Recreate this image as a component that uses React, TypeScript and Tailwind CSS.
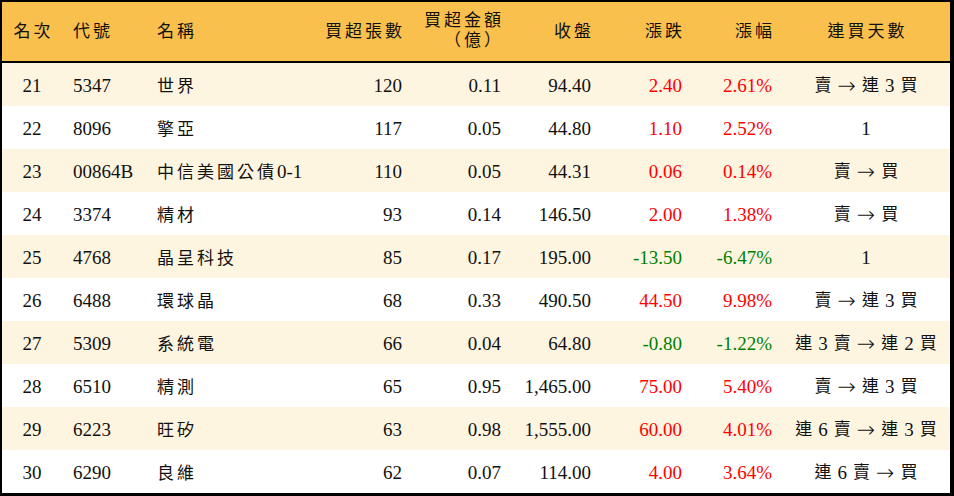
const rows = [
  { rank: 21, code: "5347", name: "世界", vol: "120", amt: "0.11", close: "94.40", chg: "2.40", pct: "2.61%", days: "賣 → 連 3 買" },
  { rank: 22, code: "8096", name: "擎亞", vol: "117", amt: "0.05", close: "44.80", chg: "1.10", pct: "2.52%", days: "1" },
  { rank: 23, code: "00864B", name: "中信美國公債0-1", vol: "110", amt: "0.05", close: "44.31", chg: "0.06", pct: "0.14%", days: "賣 → 買" },
  { rank: 24, code: "3374", name: "精材", vol: "93", amt: "0.14", close: "146.50", chg: "2.00", pct: "1.38%", days: "賣 → 買" },
  { rank: 25, code: "4768", name: "晶呈科技", vol: "85", amt: "0.17", close: "195.00", chg: "-13.50", pct: "-6.47%", days: "1" },
  { rank: 26, code: "6488", name: "環球晶", vol: "68", amt: "0.33", close: "490.50", chg: "44.50", pct: "9.98%", days: "賣 → 連 3 買" },
  { rank: 27, code: "5309", name: "系統電", vol: "66", amt: "0.04", close: "64.80", chg: "-0.80", pct: "-1.22%", days: "連 3 賣 → 連 2 買" },
  { rank: 28, code: "6510", name: "精測", vol: "65", amt: "0.95", close: "1,465.00", chg: "75.00", pct: "5.40%", days: "賣 → 連 3 買" },
  { rank: 29, code: "6223", name: "旺矽", vol: "63", amt: "0.98", close: "1,555.00", chg: "60.00", pct: "4.01%", days: "連 6 賣 → 連 3 買" },
  { rank: 30, code: "6290", name: "良維", vol: "62", amt: "0.07", close: "114.00", chg: "4.00", pct: "3.64%", days: "連 6 賣 → 買" },
]

const cols = "grid grid-cols-[60px_85px_163px_102px_99px_90px_91px_90px_1fr]"
const isCjk = (s: string) => /[\u3000-\u9fff\uff00-\uffef]/.test(s)

// split mixed text into CJK / latin runs so CJK gets its own size + spacing
function Mixed({ text }: { text: string }) {
  const parts = text.match(/[\u3000-\u9fff\uff00-\uffef]+|[^\u3000-\u9fff\uff00-\uffef]+/g) || []
  return (
    <>
      {parts.map((p, i) =>
        isCjk(p) ? (
          <span key={i} className="text-[17px] tracking-[3px]">{p}</span>
        ) : (
          <span key={i}>{p}</span>
        )
      )}
    </>
  )
}

function Days({ text }: { text: string }) {
  return (
    <div className="flex items-center justify-center gap-[6px]">
      {text.split(" ").map((t, i) => {
        if (t === "→")
          return (
            <span key={i} className="text-[22px] leading-none font-['DejaVu_Sans'] font-extralight">→</span>
          )
        return <span key={i} className={isCjk(t) ? "text-[17px]" : "text-[19px]"}>{t}</span>
      })}
    </div>
  )
}

function Head({ children, className = "" }: { children: React.ReactNode; className?: string }) {
  return <div className={`flex items-center text-[17px] tracking-[3px] ${className}`}>{children}</div>
}

export default function App() {
  return (
    <div
      className="w-[954px] h-[496px] bg-white text-[#111] border-l-2 border-t-2 border-r-4 border-b-[3px] border-black overflow-hidden"
      style={{ fontFamily: "'Liberation Serif', 'Noto Sans CJK TC', serif" }}
    >
      {/* Header */}
      <div className={`${cols} h-[61px] bg-[#F9C04E] border-b-2 border-black pt-[1px]`}>
        <Head className="justify-center pl-[3px]">名次</Head>
        <Head className="pl-[11px]">代號</Head>
        <Head className="pl-[10px]">名稱</Head>
        <Head className="justify-end pr-[7px]">買超張數</Head>
        <div className="flex flex-col justify-center items-end pr-[7px] text-[17px] tracking-[3px] leading-[20px] pb-[2px]">
          <span>買超金額</span>
          <span>（億）</span>
        </div>
        <Head className="justify-end pr-[7px]">收盤</Head>
        <Head className="justify-end pr-[7px]">漲跌</Head>
        <Head className="justify-end pr-[7px]">漲幅</Head>
        <Head className="justify-center pl-[3px]">連買天數</Head>
      </div>

      {/* Rows */}
      {rows.map((r, idx) => {
        const color = r.chg.startsWith("-") ? "text-[#008000]" : "text-[#FF0000]"
        return (
          <div key={r.rank} className={`${cols} h-[43px] pt-[3px] text-[19px] items-center ${idx % 2 === 0 ? "bg-[#FEF5E1]" : "bg-white"}`}>
            <div className="text-center">{r.rank}</div>
            <div className="pl-[11px]">{r.code}</div>
            <div className="pl-[10px] whitespace-nowrap"><Mixed text={r.name} /></div>
            <div className="text-right pr-[10px]">{r.vol}</div>
            <div className="text-right pr-[10px]">{r.amt}</div>
            <div className="text-right pr-[10px]">{r.close}</div>
            <div className={`text-right pr-[10px] ${color}`}>{r.chg}</div>
            <div className={`text-right pr-[10px] ${color}`}>{r.pct}</div>
            <Days text={r.days} />
          </div>
        )
      })}
    </div>
  )
}
